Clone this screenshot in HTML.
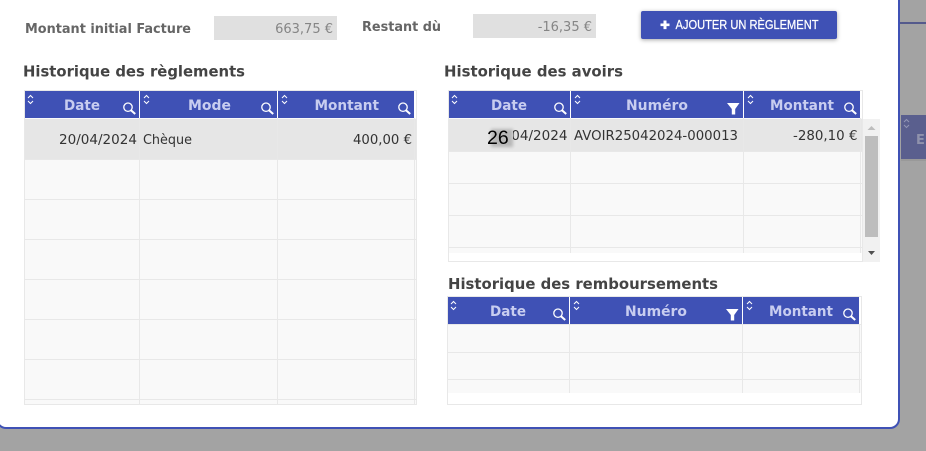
<!DOCTYPE html>
<html lang="fr"><head><meta charset="utf-8"><title>Règlements</title>
<style>
html,body{margin:0;padding:0;width:926px;height:451px;overflow:hidden;background:#a3a3a3}
svg{position:absolute;left:0;top:0;display:block}
text{font-family:"DejaVu Sans","Liberation Sans",sans-serif}
.h{font-size:14px;font-weight:700;fill:#c8cdf0}
.c{font-size:13px;fill:#333}
.r{text-anchor:end}
.t{font-size:15px;font-weight:700;fill:#444}
.l{font-size:13px;font-weight:700;fill:#666}
.v{font-size:13px;fill:#858585;text-anchor:end}
.s{fill:none;stroke:#fff;stroke-width:1}
.m{fill:none;stroke:#fff;stroke-width:1.3}
.n{fill:none;stroke:#fff;stroke-width:2}
.g{fill:#e8e8e8}
</style></head><body>
<svg width="926" height="451" viewBox="0 0 926 451" xmlns="http://www.w3.org/2000/svg">
<defs>
<filter id="b" x="-40%" y="-40%" width="180%" height="180%"><feGaussianBlur stdDeviation="1.5"/></filter>
<g id="sort"><path class="s" d="M0 3 L2.5 0.5 L5 3 M0 6 L2.5 8.5 L5 6"/></g>
<g id="mag"><circle class="m" cx="5" cy="5.2" r="4.2"/><path class="n" d="M8 8.200 L12.200 12"/></g>
<g id="fil"><path fill="#fff" d="M0 0 H12.500 L8.200 6 V11.500 H4.800 V6 Z"/></g>
</defs>

<!-- modal -->
<rect x="-3" y="-10" width="902" height="438" rx="9" fill="#fff" stroke="#3f51b5" stroke-width="2"/>
<rect x="900" y="22" width="26" height="2" fill="#545a8c"/>
<rect x="901" y="115" width="25" height="44" fill="#5a5f8e"/>
<rect x="901" y="159" width="25" height="2" fill="#999"/>
<use href="#sort" x="904" y="119" opacity=".35"/>
<text x="916" y="144" font-size="13" font-weight="700" fill="#8f92ac">E</text>

<!-- top -->
<text class="l" x="25" y="33" textLength="166" lengthAdjust="spacingAndGlyphs">Montant initial Facture</text>
<rect x="214" y="16" width="123" height="24" fill="#e0e0e0"/>
<text class="v" x="333" y="33">663,75 €</text>
<text class="l" x="362" y="31" textLength="79" lengthAdjust="spacingAndGlyphs">Restant dù</text>
<rect x="473" y="14" width="123" height="24" fill="#e0e0e0"/>
<text class="v" x="592" y="31">-16,35 €</text>
<rect x="641" y="11" width="196" height="28" rx="2" fill="#3f51b5" style="filter:drop-shadow(0 1px 2px rgba(0,0,0,.35))"/>
<path fill="#fff" d="M663.500 20.500h3v3h3v2.600h-3v3h-3v-3h-3v-2.600h3z"/>
<text x="675.500" y="29" textLength="143" lengthAdjust="spacingAndGlyphs" font-size="12.500" font-weight="500" fill="#fff" stroke="#fff" stroke-width=".25" style="font-family:'Liberation Sans',sans-serif">AJOUTER UN RÈGLEMENT</text>

<text class="t" x="23" y="76.500" textLength="222" lengthAdjust="spacingAndGlyphs">Historique des règlements</text>
<text class="t" x="444" y="76.500" textLength="179" lengthAdjust="spacingAndGlyphs">Historique des avoirs</text>
<text class="t" x="448" y="289" textLength="270" lengthAdjust="spacingAndGlyphs">Historique des remboursements</text>

<!-- table 1 -->
<rect x="24" y="90" width="393" height="315" fill="#fff"/>
<rect x="25" y="118" width="391" height="286" fill="#f9f9f9"/>
<rect x="25" y="119" width="391" height="40" fill="#e6e6e6"/>
<g class="g">
<rect x="24" y="90" width="393" height="1"/><rect x="24" y="90" width="1" height="315"/><rect x="416" y="90" width="1" height="315"/><rect x="24" y="404" width="393" height="1"/>
<rect x="139" y="118" width="1" height="287"/><rect x="277" y="118" width="1" height="287"/><rect x="414" y="118" width="1" height="287"/>
<rect x="25" y="159" width="391" height="1"/><rect x="25" y="199" width="391" height="1"/><rect x="25" y="239" width="391" height="1"/><rect x="25" y="279" width="391" height="1"/><rect x="25" y="319" width="391" height="1"/><rect x="25" y="359" width="391" height="1"/><rect x="25" y="399" width="391" height="1"/>
</g>
<rect x="25" y="91" width="390" height="27" fill="#3f51b5"/>
<rect x="139" y="91" width="1" height="27" fill="#fff"/><rect x="277" y="91" width="1" height="27" fill="#fff"/><rect x="414" y="91" width="1" height="27" fill="#fff"/>
<use href="#sort" x="28" y="95"/><use href="#sort" x="144" y="95"/><use href="#sort" x="282" y="95"/>
<text class="h" x="64" y="110" textLength="36" lengthAdjust="spacingAndGlyphs">Date</text><text class="h" x="188" y="110" textLength="43" lengthAdjust="spacingAndGlyphs">Mode</text><text class="h" x="314.500" y="110" textLength="64.500" lengthAdjust="spacingAndGlyphs">Montant</text>
<use href="#mag" x="123" y="102"/><use href="#mag" x="261" y="102"/><use href="#mag" x="398" y="102"/>
<text class="c" x="59" y="144" textLength="78" lengthAdjust="spacingAndGlyphs">20/04/2024</text><text class="c" x="143" y="144" textLength="49" lengthAdjust="spacingAndGlyphs">Chèque</text><text class="c" x="353" y="144" textLength="59" lengthAdjust="spacingAndGlyphs">400,00 €</text>

<!-- table 2 -->
<rect x="448" y="90" width="415" height="172" fill="#fff"/>
<rect x="449" y="118" width="413" height="135" fill="#f9f9f9"/>
<rect x="449" y="119" width="413" height="32" fill="#e6e6e6"/>
<g class="g">
<rect x="448" y="90" width="415" height="1"/><rect x="448" y="90" width="1" height="172"/><rect x="448" y="261" width="415" height="1"/><rect x="862" y="90" width="1" height="172"/>
<rect x="570" y="118" width="1" height="135"/><rect x="743" y="118" width="1" height="135"/><rect x="860" y="118" width="1" height="135"/>
<rect x="449" y="151" width="413" height="1"/><rect x="449" y="183" width="413" height="1"/><rect x="449" y="215" width="413" height="1"/><rect x="449" y="247" width="413" height="1"/>
</g>
<rect x="449" y="91" width="412" height="27" fill="#3f51b5"/>
<rect x="570" y="91" width="1" height="27" fill="#fff"/><rect x="743" y="91" width="1" height="27" fill="#fff"/><rect x="860" y="91" width="1" height="27" fill="#fff"/>
<use href="#sort" x="452" y="95"/><use href="#sort" x="575" y="95"/><use href="#sort" x="748" y="95"/>
<text class="h" x="491" y="110" textLength="36" lengthAdjust="spacingAndGlyphs">Date</text><text class="h" x="626" y="110" textLength="62" lengthAdjust="spacingAndGlyphs">Numéro</text><text class="h" x="770" y="110" textLength="64" lengthAdjust="spacingAndGlyphs">Montant</text>
<use href="#mag" x="554" y="102"/><use href="#fil" x="727" y="103"/><use href="#mag" x="844" y="102"/>
<text class="c" x="489.500" y="140" textLength="78" lengthAdjust="spacingAndGlyphs">20/04/2024</text><text class="c" x="574" y="140" textLength="164" lengthAdjust="spacingAndGlyphs">AVOIR25042024-000013</text><text class="c" x="793" y="140" textLength="64.500" lengthAdjust="spacingAndGlyphs">-280,10 €</text>
<rect x="486" y="128" width="27" height="18" fill="#e6e6e6"/>
<rect x="491" y="129" width="22" height="18" fill="#000" opacity=".2" filter="url(#b)"/>
<text x="487" y="144" font-size="19.500" fill="#000" style="font-family:'Liberation Sans',sans-serif">26</text>
<rect x="863" y="119" width="17" height="143" fill="#f1f1f1"/>
<rect x="865" y="136" width="13" height="101" fill="#bdbdbd"/>
<path fill="#bdbdbd" d="M867.500 130 L871.500 126 L875.500 130 Z"/>
<path fill="#505050" d="M868 251 H875 L871.500 255 Z"/>

<!-- table 3 -->
<rect x="447" y="296" width="415" height="109" fill="#fff"/>
<rect x="448" y="324" width="413" height="69" fill="#f9f9f9"/>
<g class="g">
<rect x="447" y="296" width="415" height="1"/><rect x="447" y="296" width="1" height="109"/><rect x="861" y="296" width="1" height="109"/><rect x="447" y="404" width="415" height="1"/>
<rect x="569" y="324" width="1" height="69"/><rect x="742" y="324" width="1" height="69"/><rect x="859" y="324" width="1" height="69"/>
<rect x="448" y="324" width="413" height="1"/><rect x="448" y="352" width="413" height="1"/><rect x="448" y="379" width="413" height="1"/>
</g>
<rect x="448" y="297" width="412" height="27" fill="#3f51b5"/>
<rect x="569" y="297" width="1" height="27" fill="#fff"/><rect x="742" y="297" width="1" height="27" fill="#fff"/><rect x="859" y="297" width="1" height="27" fill="#fff"/>
<use href="#sort" x="451" y="301"/><use href="#sort" x="574" y="301"/><use href="#sort" x="747" y="301"/>
<text class="h" x="490" y="316" textLength="36" lengthAdjust="spacingAndGlyphs">Date</text><text class="h" x="625" y="316" textLength="62" lengthAdjust="spacingAndGlyphs">Numéro</text><text class="h" x="769" y="316" textLength="64" lengthAdjust="spacingAndGlyphs">Montant</text>
<use href="#mag" x="553" y="308"/><use href="#fil" x="726" y="309"/><use href="#mag" x="843" y="308"/>
</svg>
</body></html>
